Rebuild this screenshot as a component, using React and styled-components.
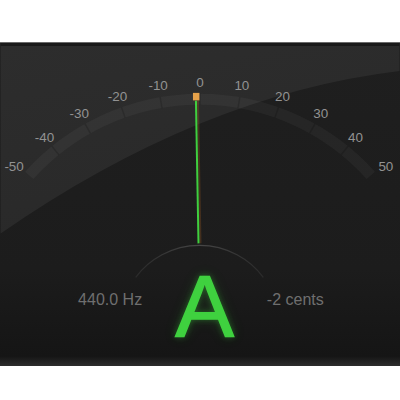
import styled, { createGlobalStyle } from 'styled-components';

const GlobalStyle = createGlobalStyle`
  html, body {
    margin: 0;
    padding: 0;
    background: #ffffff;
  }

  body {
    font-family: 'Liberation Sans', Arial, sans-serif;
  }
`;

const Page = styled.main`
  width: 400px;
  height: 400px;
  padding-top: 42px;
  box-sizing: border-box;
`;

const Panel = styled.section`
  position: relative;
  height: 324px;
  overflow: hidden;
  display: flex;
  flex-direction: column;
  justify-content: flex-end;
  padding-bottom: 15px;
  box-sizing: border-box;
  background: linear-gradient(#1f1f1f, #1c1c1c 70%, #151515 97%, #2c2c2c 100%);
  border-top: 1px solid #6a6a6a;
`;

const Face = styled.svg`
  position: absolute;
  inset: 0;
  width: 100%;
  height: 100%;
`;

const Readout = styled.div`
  position: relative;
  display: grid;
  grid-template-columns: 1fr auto 1fr;
  column-gap: 33px;
  align-items: start;
  padding-left: 9px;
`;

const Reading = styled.span`
  margin-top: 29px;
  font-size: 16px;
  line-height: 16px;
  color: #6f6f6f;
  text-align: ${(p) => (p.$side === 'left' ? 'right' : 'left')};
  white-space: nowrap;
`;

const Note = styled.span`
  font-size: 88px;
  line-height: 1;
  color: #3fd13f;
  -webkit-text-stroke: 1.4px #3fd13f;
  text-shadow: 0 0 6px rgba(60, 210, 60, 0.45), 0 0 14px rgba(60, 210, 60, 0.18);
`;

// dial geometry, in panel coordinates
const CX = 200;
const CY = 287;
const DEG = 0.975;

const polar = (r, deg) => {
  const a = (deg * Math.PI) / 180;
  return [CX + r * Math.sin(a), CY - r * Math.cos(a)];
};

const arcPath = (r, from, to) => {
  const [x1, y1] = polar(r, from);
  const [x2, y2] = polar(r, to);
  return `M${x1},${y1} A${r},${r} 0 0 1 ${x2},${y2}`;
};

const Dial = ({ cents }) => {
  const marks = [-50, -40, -30, -20, -10, 0, 10, 20, 30, 40, 50];
  const tip = polar(233, cents * 0.5);

  return (
    <Face viewBox="0 0 400 324" aria-hidden="true">
      <defs>
        <linearGradient id="gloss" x1="0" y1="0" x2="0.4" y2="1">
          <stop offset="0" stopColor="#2d2d2d" />
          <stop offset="1" stopColor="#292929" />
        </linearGradient>
        <linearGradient id="hub" x1="0" y1="0" x2="1" y2="0">
          <stop offset="0" stopColor="#3a3a3a" stopOpacity="0.5" />
          <stop offset="0.5" stopColor="#474747" />
          <stop offset="1" stopColor="#3a3a3a" stopOpacity="0.5" />
        </linearGradient>
      </defs>

      <path d="M0,0 H400 V28 Q200,52 0,191 Z" fill="url(#gloss)" />
      <rect x="0" y="0" width="400" height="3" fill="#1a1a1a" />

      <path d={arcPath(230.5, -48, 48)} fill="none" stroke="#ffffff" strokeOpacity="0.04" strokeWidth="11" />
      {marks.slice(1, -1).map((m) => {
        const [x1, y1] = polar(225, m * DEG);
        const [x2, y2] = polar(236, m * DEG);
        return <line key={m} x1={x1} y1={y1} x2={x2} y2={y2} stroke="#000" strokeOpacity="0.16" strokeWidth="1.5" />;
      })}

      {marks.map((m) => {
        const [x, y] = polar(248, m * DEG);
        return (
          <text
            key={m}
            x={x}
            y={y + 4.7}
            textAnchor="middle"
            fontFamily="'Liberation Sans', Arial, sans-serif"
            fontSize="13.5"
            fill="#929292"
          >
            {m}
          </text>
        );
      })}

      <path d="M135.5,235 A80,80 0 0 1 263.5,235" fill="none" stroke="url(#hub)" strokeWidth="1.2" />

      <line x1={tip[0] + 2} y1={tip[1] + 4} x2="200.5" y2="201" stroke="#a05a20" strokeOpacity="0.3" strokeWidth="2" />
      <line x1={tip[0]} y1={tip[1] + 4} x2="198.5" y2="201" stroke="#3fcf3f" strokeWidth="2" />
      <rect x={tip[0] - 3} y={tip[1] - 4} width="6.5" height="7.5" fill="#e6a24a" />
    </Face>
  );
};

const App = () => {
  const cents = -2;

  return (
    <Page>
      <GlobalStyle />
      <Panel>
        <Dial cents={cents} />
        <Readout>
          <Reading $side="left">440.0 Hz</Reading>
          <Note>A</Note>
          <Reading $side="right">{cents} cents</Reading>
        </Readout>
      </Panel>
    </Page>
  );
};

export default App;
